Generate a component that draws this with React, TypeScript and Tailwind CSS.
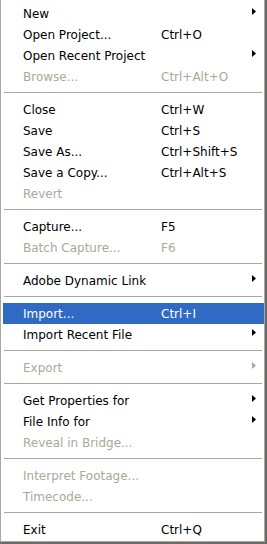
import React from "react";

type Item =
  | { type: "sep" }
  | {
      type?: "item";
      label: string;
      shortcut?: string;
      sub?: boolean;
      disabled?: boolean;
      active?: boolean;
    };

const items: Item[] = [
  { label: "New", sub: true },
  { label: "Open Project...", shortcut: "Ctrl+O" },
  { label: "Open Recent Project", sub: true },
  { label: "Browse...", shortcut: "Ctrl+Alt+O", disabled: true },
  { type: "sep" },
  { label: "Close", shortcut: "Ctrl+W" },
  { label: "Save", shortcut: "Ctrl+S" },
  { label: "Save As...", shortcut: "Ctrl+Shift+S" },
  { label: "Save a Copy...", shortcut: "Ctrl+Alt+S" },
  { label: "Revert", disabled: true },
  { type: "sep" },
  { label: "Capture...", shortcut: "F5" },
  { label: "Batch Capture...", shortcut: "F6", disabled: true },
  { type: "sep" },
  { label: "Adobe Dynamic Link", sub: true },
  { type: "sep" },
  { label: "Import...", shortcut: "Ctrl+I", active: true },
  { label: "Import Recent File", sub: true },
  { type: "sep" },
  { label: "Export", sub: true, disabled: true },
  { type: "sep" },
  { label: "Get Properties for", sub: true },
  { label: "File Info for", sub: true },
  { label: "Reveal in Bridge...", disabled: true },
  { type: "sep" },
  { label: "Interpret Footage...", disabled: true },
  { label: "Timecode...", disabled: true },
  { type: "sep" },
  { label: "Exit", shortcut: "Ctrl+Q" },
];

function Arrow({ color }: { color: string }) {
  return (
    <svg width="4" height="7" viewBox="0 0 4 7" className="-mt-[4px] block">
      <polygon points="0,0 4,3.5 0,7" fill={color} />
    </svg>
  );
}

export default function App() {
  return (
    <div
      className="w-[267px] h-[544px] bg-[#6b6b6b] pr-[2px] pb-[2px]"
      style={{ fontFamily: '"DejaVu Sans", Tahoma, sans-serif' }}
    >
      <div className="h-full bg-white border-l border-r border-b border-[#ACA899] pt-[3px] pl-[2px] pb-[1px] flex flex-col text-[12px]">
        {items.map((it, i) => {
          if (it.type === "sep") {
            return (
              <div key={i} className="h-[12px] pt-[5px] pl-[1px] pr-[2px]">
                <div className="h-px bg-[#ACA899]" />
              </div>
            );
          }
          const color = it.active
            ? "text-white"
            : it.disabled
            ? "text-[#ACA899]"
            : "text-black";
          return (
            <div
              key={i}
              className={`h-[21px] grid grid-cols-[158px_91px_4px] items-center whitespace-nowrap ${
                it.active ? "bg-[#316AC5]" : ""
              } ${color}`}
            >
              <div className="pl-[20px]">{it.label}</div>
              <div>{it.shortcut ?? ""}</div>
              <div className="flex items-center">
                {it.sub ? (
                  <Arrow color={it.disabled ? "#ACA899" : it.active ? "#fff" : "#000"} />
                ) : null}
              </div>
            </div>
          );
        })}
      </div>
    </div>
  );
}
